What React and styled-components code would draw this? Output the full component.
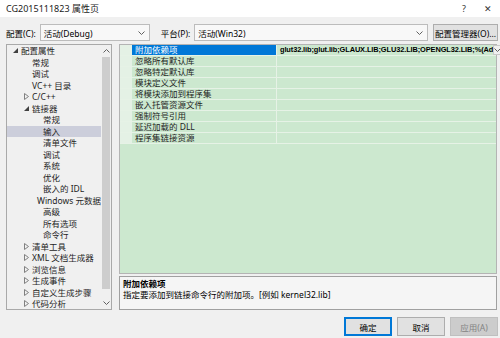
import styled, { createGlobalStyle } from 'styled-components';

const GlobalStyle = createGlobalStyle`
  html, body {
    margin: 0;
    padding: 0;
    background: #f0f0f0;
  }
  body {
    font-family: "Noto Sans", "Noto Sans CJK SC", sans-serif;
    font-size: 9px;
    color: #000;
  }
`;

const tree = [
  { level: 0, text: '配置属性', arrow: 'open' },
  { level: 1, text: '常规' },
  { level: 1, text: '调试' },
  { level: 1, text: 'VC++ 目录' },
  { level: 1, text: 'C/C++', arrow: 'closed' },
  { level: 1, text: '链接器', arrow: 'open' },
  { level: 2, text: '常规' },
  { level: 2, text: '输入', selected: true },
  { level: 2, text: '清单文件' },
  { level: 2, text: '调试' },
  { level: 2, text: '系统' },
  { level: 2, text: '优化' },
  { level: 2, text: '嵌入的 IDL' },
  { level: 2, text: 'Windows 元数据' },
  { level: 2, text: '高级' },
  { level: 2, text: '所有选项' },
  { level: 2, text: '命令行' },
  { level: 1, text: '清单工具', arrow: 'closed' },
  { level: 1, text: 'XML 文档生成器', arrow: 'closed' },
  { level: 1, text: '浏览信息', arrow: 'closed' },
  { level: 1, text: '生成事件', arrow: 'closed' },
  { level: 1, text: '自定义生成步骤', arrow: 'closed' },
  { level: 1, text: '代码分析', arrow: 'closed' },
];

const props = [
  '附加依赖项',
  '忽略所有默认库',
  '忽略特定默认库',
  '模块定义文件',
  '将模块添加到程序集',
  '嵌入托管资源文件',
  '强制符号引用',
  '延迟加载的 DLL',
  '程序集链接资源',
];

const Chevron = ({ up }) => (
  <svg width="7" height="4" viewBox="0 0 7 4">
    <polyline
      points={up ? '0.5,3.5 3.5,0.5 6.5,3.5' : '0.5,0.5 3.5,3.5 6.5,0.5'}
      fill="none"
      stroke="#606060"
      strokeWidth="1"
    />
  </svg>
);

const Arrow = ({ type }) =>
  type === 'open' ? (
    <svg width="5" height="5" viewBox="0 0 5 5">
      <polygon points="5,0 5,5 0,5" fill="#404040" />
    </svg>
  ) : (
    <svg width="5" height="7" viewBox="0 0 5 7">
      <polygon points="0.5,0.5 4.5,3.5 0.5,6.5" fill="none" stroke="#808080" strokeWidth="1" />
    </svg>
  );

const App = () => {
  return (
    <Window>
      <GlobalStyle />
      <TitleBar>
        <span>CG2015111823 属性页</span>
        <TitleIcons>
          <TitleIcon>?</TitleIcon>
          <TitleIcon>✕</TitleIcon>
        </TitleIcons>
      </TitleBar>

      <ConfigRow>
        <Label>配置(C):</Label>
        <Combo width={110}>
          <span>活动(Debug)</span>
          <Chevron />
        </Combo>
        <Label gap>平台(P):</Label>
        <Combo grow>
          <span>活动(Win32)</span>
          <Chevron />
        </Combo>
        <Button width={65}>配置管理器(O)...</Button>
      </ConfigRow>

      <Main>
        <Tree>
          <TreeList>
            {tree.map((item, i) => (
              <TreeRow key={i} level={item.level} selected={item.selected}>
                <ArrowSlot>{item.arrow && <Arrow type={item.arrow} />}</ArrowSlot>
                <span>{item.text}</span>
              </TreeRow>
            ))}
          </TreeList>
          <ScrollBar>
            <ScrollArrow><Chevron up /></ScrollArrow>
            <Thumb />
            <ScrollArrow><Chevron /></ScrollArrow>
          </ScrollBar>
        </Tree>

        <RightColumn>
          <Grid>
            {props.map((name, i) => (
              <GridRow key={i}>
                <Margin />
                <NameCell selected={i === 0}>{name}</NameCell>
                <ValueCell>
                  {i === 0 && (
                    <>
                      <ValueText>glut32.lib;glut.lib;GLAUX.LIB;GLU32.LIB;OPENGL32.LIB;%(Ad</ValueText>
                      <DropButton><Chevron /></DropButton>
                    </>
                  )}
                </ValueCell>
              </GridRow>
            ))}
          </Grid>
          <Description>
            <DescTitle>附加依赖项</DescTitle>
            <div>指定要添加到链接命令行的附加项。[例如 kernel32.lib]</div>
          </Description>
        </RightColumn>
      </Main>

      <ButtonRow>
        <Button width={48} primary>确定</Button>
        <Button width={48}>取消</Button>
        <Button width={48} disabled>应用(A)</Button>
      </ButtonRow>
    </Window>
  );
};

export default App;

const Window = styled.div`
  width: 500px;
  height: 338px;
  display: flex;
  flex-direction: column;
  background: #f0f0f0;
  overflow: hidden;
`;

const TitleBar = styled.div`
  height: 17px;
  background: #fff;
  display: flex;
  align-items: center;
  justify-content: space-between;
  padding-left: 6px;
  font-size: 9px;
  color: #222;
`;

const TitleIcons = styled.div`
  display: flex;
  align-items: center;
`;

const TitleIcon = styled.span`
  width: 24px;
  text-align: center;
  font-size: 9px;
  color: #333;
`;

const ConfigRow = styled.div`
  display: flex;
  align-items: center;
  margin-top: 7px;
  height: 17px;
  padding: 0 2px 0 6px;
  gap: 4px;
`;

const Label = styled.span`
  white-space: nowrap;
  font-size: 8.5px;
  margin-left: ${(p) => (p.gap ? 7 : 0)}px;
`;

const Combo = styled.div`
  box-sizing: border-box;
  height: 17px;
  width: ${(p) => (p.width ? `${p.width}px` : 'auto')};
  flex: ${(p) => (p.grow ? 1 : 'none')};
  background: #f8f8f8;
  border: 1px solid #bcbcbc;
  display: flex;
  align-items: center;
  justify-content: space-between;
  padding: 0 4px 0 3px;
  font-size: 8.5px;
`;

const Button = styled.div`
  box-sizing: border-box;
  height: ${(p) => (p.width === 48 ? 19 : 17)}px;
  width: ${(p) => p.width}px;
  margin-left: ${(p) => (p.width === 65 ? 1 : 0)}px;
  display: flex;
  align-items: center;
  justify-content: center;
  background: ${(p) => (p.disabled ? '#cccccc' : '#e1e1e1')};
  border: 1px solid ${(p) => (p.primary ? '#0078d7' : p.disabled ? '#bfbfbf' : '#adadad')};
  box-shadow: ${(p) => (p.primary ? 'inset 0 0 0 1px #0078d7' : 'none')};
  color: ${(p) => (p.disabled ? '#838383' : '#000')};
  font-size: 8.5px;
  white-space: nowrap;
`;

const Main = styled.div`
  display: flex;
  margin-top: 3px;
  height: 266px;
  padding: 0 3px 0 6px;
  gap: 7px;
`;

const Tree = styled.div`
  box-sizing: border-box;
  width: 106px;
  height: 266px;
  border: 1px solid #a9a9a9;
  background: #f0f0f0;
  display: flex;
`;

const TreeList = styled.div`
  flex: 1;
  overflow: hidden;
`;

const TreeRow = styled.div`
  height: 11.5px;
  line-height: 11.5px;
  display: flex;
  align-items: center;
  padding-left: ${(p) => 3 + p.level * 11}px;
  background: ${(p) => (p.selected ? '#cccedb' : 'transparent')};
  font-size: 8.5px;
  white-space: nowrap;
  color: #1e1e1e;
`;

const ArrowSlot = styled.span`
  width: 11px;
  display: flex;
  align-items: center;
  justify-content: flex-start;
  padding-left: 3px;
  box-sizing: border-box;
`;

const ScrollBar = styled.div`
  width: 10px;
  display: flex;
  flex-direction: column;
  background: #f0f0f0;
`;

const ScrollArrow = styled.div`
  height: 12px;
  display: flex;
  align-items: center;
  justify-content: center;
`;

const Thumb = styled.div`
  flex: 1;
  margin: 0 1px 8px;
  background: #cdcdcd;
`;

const RightColumn = styled.div`
  flex: 1;
  display: flex;
  flex-direction: column;
  gap: 2px;
`;

const Grid = styled.div`
  box-sizing: border-box;
  height: 230px;
  border: 1px solid #b4b4b4;
  background: #cce8cf;
`;

const GridRow = styled.div`
  display: grid;
  grid-template-columns: 12px 145px 1fr;
  height: 11px;
  box-sizing: border-box;
  border-bottom: 1px solid #e6f2e6;
`;

const Margin = styled.div`
  background: #e4f1e5;
`;

const NameCell = styled.div`
  padding-left: 3px;
  line-height: 10px;
  font-size: 8.5px;
  white-space: nowrap;
  overflow: hidden;
  background: ${(p) => (p.selected ? '#0078d7' : 'transparent')};
  color: ${(p) => (p.selected ? '#fff' : '#1e1e1e')};
  border-right: 1px solid #e6f2e6;
`;

const ValueCell = styled.div`
  display: flex;
  align-items: center;
  justify-content: space-between;
  min-width: 0;
  padding-left: 3px;
`;

const ValueText = styled.span`
  white-space: nowrap;
  font-family: "Liberation Sans", Arial, sans-serif;
  font-weight: bold;
  font-size: 7.4px;
  letter-spacing: -0.1px;
  line-height: 10px;
`;

const DropButton = styled.div`
  box-sizing: border-box;
  width: 10px;
  height: 10px;
  margin-right: 1px;
  background: #f0f0f0;
  border: 1px solid #c8c8c8;
  display: flex;
  align-items: center;
  justify-content: center;
`;

const Description = styled.div`
  box-sizing: border-box;
  height: 34px;
  border: 1px solid #a0a0a0;
  background: #f5f5f5;
  padding: 1px 3px;
  font-size: 8.5px;
  line-height: 11px;
`;

const DescTitle = styled.div`
  font-weight: bold;
`;

const ButtonRow = styled.div`
  display: flex;
  justify-content: flex-end;
  gap: 5px;
  margin-top: 7px;
  padding-right: 2px;
`;
